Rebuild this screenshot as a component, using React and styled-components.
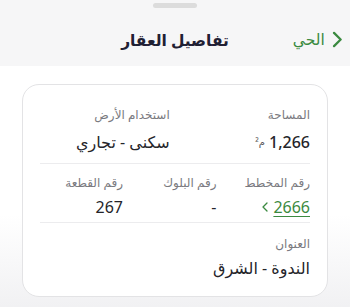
import React from "react";
import styled, { createGlobalStyle } from "styled-components";

const Global = createGlobalStyle`
  html, body {
    margin: 0;
    padding: 0;
    width: 350px;
    height: 307px;
    overflow: hidden;
    font-family: "Noto Sans", "DejaVu Sans", sans-serif;
  }
`;

const Sheet = styled.div`
  width: 350px;
  height: 307px;
  direction: rtl;
  display: flex;
  flex-direction: column;
  background: linear-gradient(#ffffff 70%, #f1f1f3);
`;

const Header = styled.div`
  height: 66px;
  flex-shrink: 0;
  background: #f6f6f7;
  position: relative;
  display: flex;
  align-items: center;
  padding: 0 8px;
`;

const Handle = styled.div`
  position: absolute;
  top: 3px;
  left: 153px;
  width: 44px;
  height: 5px;
  border-radius: 3px;
  background: #dcdcdc;
`;

const Back = styled.div`
  display: flex;
  align-items: center;
  gap: 7px;
  color: #3b8a40;
  font-size: 15.5px;
  margin-top: 12px;
`;

const Title = styled.div`
  position: absolute;
  left: 0;
  right: 0;
  top: 29px;
  text-align: center;
  font-size: 15.5px;
  font-weight: 700;
  color: #1f2033;
`;

const Body = styled.div`
  padding: 18px 22px 0;
`;

const Card = styled.div`
  background: #ffffff;
  border: 1px solid #e3e3e5;
  border-radius: 17px;
  padding: 0 17px;
  height: 211px;
`;

const Section = styled.div`
  display: grid;
  grid-template-columns: repeat(${(p) => p.cols}, 1fr);
  column-gap: 10.5px;
  padding: ${(p) => p.pad};
  border-bottom: ${(p) => (p.last ? "none" : "1px solid #ececee")};
`;

const Field = styled.div`
  display: flex;
  flex-direction: column;
  gap: ${(p) => p.gap || 6}px;
`;

const Label = styled.div`
  font-size: 12px;
  line-height: 18px;
  color: #7a7a80;
`;

const Value = styled.div`
  font-size: 16px;
  line-height: 24px;
  color: #25252a;
  font-weight: ${(p) => (p.bold ? 500 : 400)};
  display: flex;
  align-items: center;
  gap: 4px;
`;

const Unit = styled.span`
  font-size: 10px;
  font-weight: 400;
  color: #555;
`;

const Link = styled.span`
  color: #3b8a40;
  text-decoration: underline;
  text-underline-offset: 3px;
  display: flex;
  align-items: center;
  gap: 5px;
`;

const Chevron = ({ size = 16, w = 2.2 }) => (
  <svg width={size * 0.6} height={size} viewBox="0 0 10 16" fill="none">
    <path d="M2 1.5 L8.5 8 L2 14.5" stroke="#3b8a40" strokeWidth={w} strokeLinecap="round" strokeLinejoin="round" />
  </svg>
);

export default function App() {
  return (
    <>
      <Global />
      <Sheet>
        <Header>
          <Handle />
          <Back>
            <Chevron size={17} />
            <span>الحي</span>
          </Back>
          <Title>تفاصيل العقار</Title>
        </Header>
        <Body>
          <Card>
            <Section cols={2} pad="21px 0 9px">
              <Field gap={6}>
                <Label>المساحة</Label>
                <Value bold>
                  <span>1,266</span>
                  <Unit>م²</Unit>
                </Value>
              </Field>
              <Field gap={6}>
                <Label>استخدام الأرض</Label>
                <Value>سكنى - تجاري</Value>
              </Field>
            </Section>
            <Section cols={3} pad="10px 0 3px">
              <Field gap={3}>
                <Label>رقم المخطط</Label>
                <Value>
                  <Link>
                    <span>2666</span>
                    <svg width="6" height="10" viewBox="0 0 6 10" fill="none">
                      <path d="M5 1 L1 5 L5 9" stroke="#3b8a40" strokeWidth="1.3" strokeLinecap="round" strokeLinejoin="round" />
                    </svg>
                  </Link>
                </Value>
              </Field>
              <Field gap={3}>
                <Label>رقم البلوك</Label>
                <Value>-</Value>
              </Field>
              <Field gap={3}>
                <Label>رقم القطعة</Label>
                <Value>267</Value>
              </Field>
            </Section>
            <Section cols={1} pad="12px 0 0" last>
              <Field gap={3}>
                <Label>العنوان</Label>
                <Value>الندوة - الشرق</Value>
              </Field>
            </Section>
          </Card>
        </Body>
      </Sheet>
    </>
  );
}
